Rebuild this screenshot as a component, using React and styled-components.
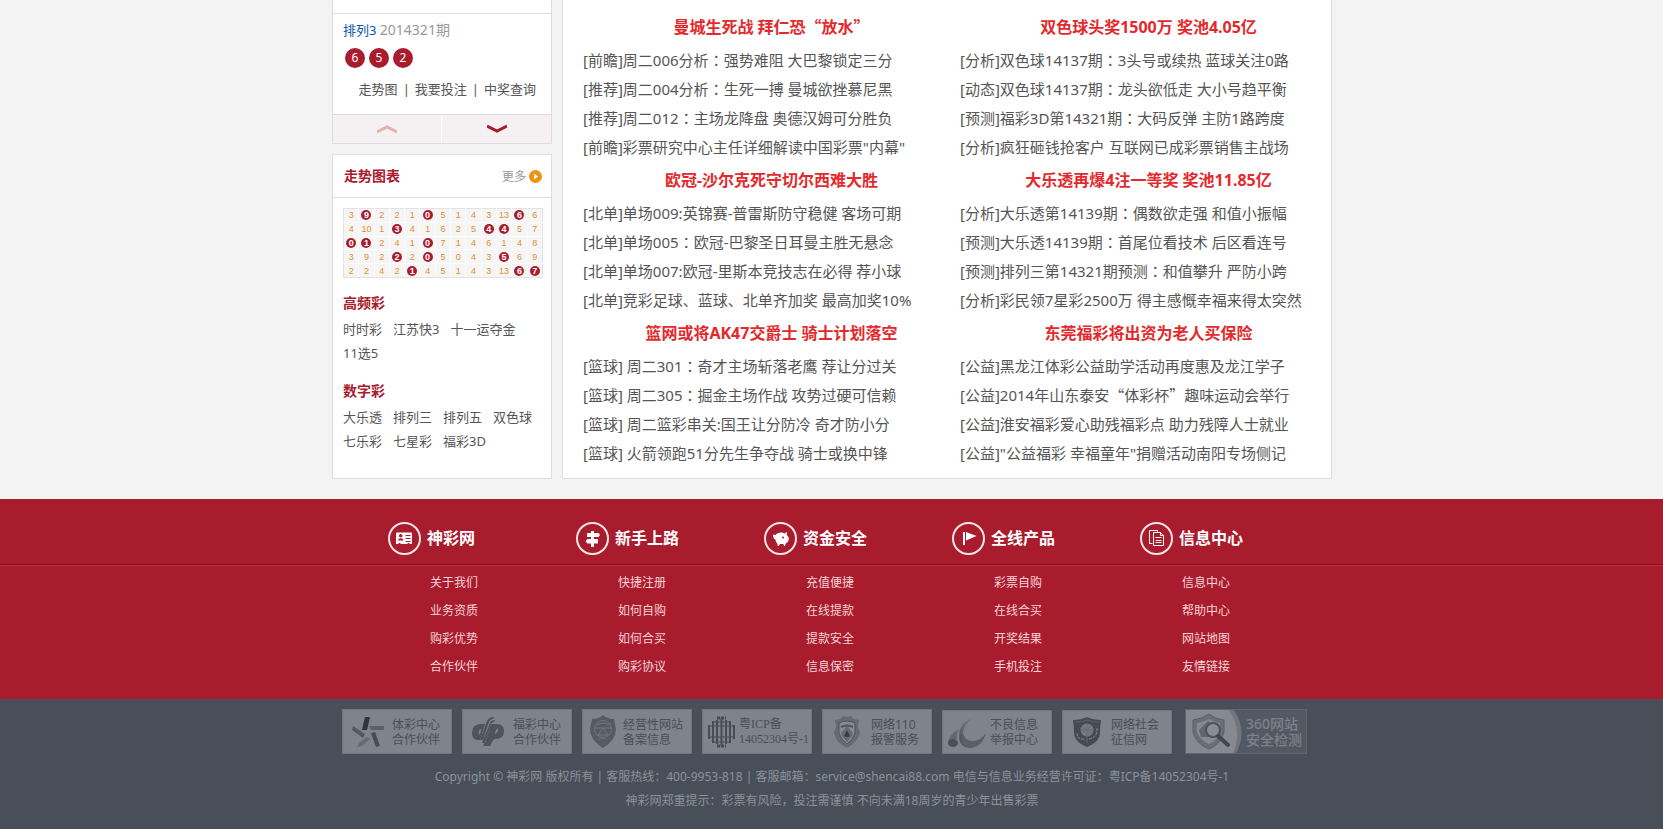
import React from "react";
import styled, { createGlobalStyle } from "styled-components";

const crimson = "#a81c2e";
const latinFirst = `"Noto Sans", "Noto Sans CJK SC", sans-serif`;

const GlobalStyle = createGlobalStyle`
  *, *::before, *::after { box-sizing: border-box; }
  body {
    margin: 0;
    background: #f3f3f3;
    color: #555;
    font-family: ${latinFirst};
    font-size: 13px;
  }
  a { color: inherit; text-decoration: none; }
  ul { list-style: none; margin: 0; padding: 0; }
  h2, h3, p { margin: 0; }
`;

const Container = styled.div`
  max-width: 1001px;
  margin: 0 auto;
  padding-left: 1px;
`;

const Main = styled.main`
  display: flex;
  gap: 10px;
  margin-bottom: 20px;
`;

const Sidebar = styled.aside`
  flex: 0 0 220px;
  display: flex;
  flex-direction: column;
  gap: 10px;
`;

const Panel = styled.section`
  background: #fff;
  border: 1px solid #ddd;
  ${(p) => p.$open && "border-top: 0;"}
  ${(p) => p.$grow && "flex: 1;"}
`;

const Draw = styled.div`
  margin-top: 13px;
  border-top: 1px solid #ddd;
  padding: 6px 10px 15px;
`;

const DrawTitle = styled.p`
  line-height: 20px;
  color: #999;
  a { color: #0a58b0; }
`;

const Period = styled.span`
  font-size: 14px;
`;

const Balls = styled.div`
  display: flex;
  gap: 4px;
  margin: 8px 2px 11px;
`;

const Ball = styled.span`
  width: 20px;
  height: 20px;
  border-radius: 50%;
  background: ${crimson};
  color: #fff;
  font-size: 12px;
  line-height: 20px;
  text-align: center;
`;

const DrawLinks = styled.nav`
  display: flex;
  justify-content: flex-end;
  gap: 5px;
  padding-right: 5px;
  line-height: 20px;
`;

const Pager = styled.div`
  display: grid;
  grid-template-columns: 1fr 1fr;
  border-top: 1px solid #ddd;
`;

const PagerButton = styled.button`
  display: flex;
  align-items: center;
  justify-content: center;
  height: 28px;
  padding: 0;
  border: 0;
  background: #f5f0f1;
  color: ${(p) => (p.$muted ? "#e5b3ae" : crimson)};
  &:first-child { border-right: 1px solid #fff; }
`;

const PanelHead = styled.header`
  display: flex;
  align-items: center;
  justify-content: space-between;
  height: 43px;
  padding: 0 9px 0 11px;
  border-bottom: 1px solid #ddd;
`;

const PanelTitle = styled.h2`
  color: ${crimson};
  font-size: 14px;
  line-height: 24px;
`;

const More = styled.a`
  display: flex;
  align-items: center;
  gap: 3px;
  font-size: 12px;
  && { color: #999; }
`;

const PanelBody = styled.div`
  padding: 10px 8px 24px 10px;
`;

const Trend = styled.table`
  width: 100%;
  height: 70px;
  table-layout: fixed;
  border-collapse: collapse;
  border: 1px solid #e2e2e2;
  background: #f5f5f5;
  color: #e0912c;
  font: 9px/10px "Liberation Sans", sans-serif;
  td {
    height: 13px;
    padding: 0;
    border: 1px solid #fbfbfb;
    text-align: center;
  }
  tr:first-child td { border-top-color: #e2e2e2; }
  tr:last-child td { border-bottom-color: #e2e2e2; }
  td:first-child { border-left-color: #e2e2e2; }
  td:last-child { border-right-color: #e2e2e2; }
`;

const Hit = styled.b`
  display: block;
  width: 10px;
  height: 10px;
  margin: 0 auto;
  border-radius: 50%;
  background: ${crimson};
  color: #fff;
`;

const GroupTitle = styled.h3`
  margin: 13px 0 2px;
  color: ${crimson};
  font-size: 14px;
  line-height: 24px;
`;

const Games = styled.ul`
  display: flex;
  flex-wrap: wrap;
  column-gap: 11px;
  padding-bottom: 1px;
  line-height: 24px;
`;

const News = styled(Panel)`
  flex: 1;
  padding: 9px 0 10px 20px;
`;

const NewsGrid = styled.div`
  display: grid;
  grid-template-columns: 1fr 1fr;
  margin-right: -6px;
`;

const Headline = styled.h2`
  color: #e4292c;
  font-size: 16px;
  line-height: 37px;
  text-align: center;
`;

const NewsList = styled.ul`
  font-size: 15px;
  line-height: 29px;
  white-space: nowrap;
`;

const WideMark = styled.span`
  font-family: "Noto Sans CJK TC", sans-serif;
  line-height: 1;
`;

const WideQuote = styled.span`
  font-family: "Noto Sans CJK SC", sans-serif;
  line-height: 1;
`;

const SiteNav = styled.nav`
  background: ${crimson};
  color: #fff;
`;

const NavHeads = styled.div`
  border-bottom: 1px solid #8c0418;
  padding: 23px 0 9px;
`;

const NavLists = styled.div`
  border-top: 1px solid #b83446;
  padding: 3px 0 18px;
`;

const NavGrid = styled.div`
  display: grid;
  grid-template-columns: repeat(5, 188px);
  padding-left: 56px;
`;

const NavHead = styled.h2`
  display: flex;
  align-items: center;
  gap: 6px;
  font-size: 16px;
  line-height: 33px;
`;

const NavList = styled.ul`
  padding-left: 42px;
  color: #f6d3d7;
  font-size: 12px;
  line-height: 28px;
`;

const Legal = styled.footer`
  background: #484f59;
  color: #8b929a;
  padding: 10px 0 16px;
  font-size: 12px;
  line-height: 24px;
  text-align: center;
`;

const Badges = styled.div`
  display: flex;
  align-items: flex-end;
  gap: 10px;
  padding-left: 10px;
  margin-bottom: 11px;
`;

const Badge = styled.a`
  display: flex;
  align-items: center;
  width: 110px;
  height: ${(p) => (p.$short ? 44 : 45)}px;
  border: 1px solid #70767e;
  background: #7f838b;
  text-align: left;
  white-space: nowrap;
  font-size: 12px;
  line-height: 15px;
  && { color: #484f59; }
`;

const BadgeArt = styled.span`
  display: flex;
  justify-content: ${(p) => (p.$flush ? "flex-start" : "center")};
  flex: 0 0 ${(p) => p.$w}px;
`;

const BadgeText = styled.span`
  ${(p) => p.$serif && `font-family: "Liberation Serif", "Noto Sans CJK SC", serif;`}
`;

const SafeBadge = styled(Badge)`
  width: 122px;
  height: 45px;
  margin-left: 3px;
  background: #535963;
  border-color: #60666e;
  font-size: 14px;
  line-height: 16px;
  font-weight: 500;
  && { color: #7c828a; }
`;

function Cn({ children }) {
  return children.split(/([：“”])/).map((part, i) => {
    if (part === "：") return <WideMark key={i} lang="zh-TW">{part}</WideMark>;
    if (part === "“" || part === "”") return <WideQuote key={i} lang="zh-CN">{part}</WideQuote>;
    return part;
  });
}

const trend = [
  "3 *9 2 2 1 *0 5 1 4 3 13 *6 6",
  "4 10 1 *3 4 1 6 2 5 *4 *4 5 7",
  "*0 *1 2 4 1 *0 7 1 4 6 1 4 8",
  "3 9 2 *2 2 *0 5 0 4 3 *5 6 9",
  "2 2 4 2 *1 4 5 1 4 3 13 *6 *7",
].map((r) => r.split(" "));

const groups = [
  ["高频彩", ["时时彩", "江苏快3", "十一运夺金", "11选5"]],
  ["数字彩", ["大乐透", "排列三", "排列五", "双色球", "七乐彩", "七星彩", "福彩3D"]],
];

const news = [
  ["曼城生死战 拜仁恐“放水”", [
    "[前瞻]周二006分析：强势难阻 大巴黎锁定三分",
    "[推荐]周二004分析：生死一搏 曼城欲挫慕尼黑",
    "[推荐]周二012：主场龙降盘 奥德汉姆可分胜负",
    "[前瞻]彩票研究中心主任详细解读中国彩票\"内幕\""]],
  ["双色球头奖1500万 奖池4.05亿", [
    "[分析]双色球14137期：3头号或续热 蓝球关注0路",
    "[动态]双色球14137期：龙头欲低走 大小号趋平衡",
    "[预测]福彩3D第14321期：大码反弹 主防1路跨度",
    "[分析]疯狂砸钱抢客户 互联网已成彩票销售主战场"]],
  ["欧冠-沙尔克死守切尔西难大胜", [
    "[北单]单场009:英锦赛-普雷斯防守稳健 客场可期",
    "[北单]单场005：欧冠-巴黎圣日耳曼主胜无悬念",
    "[北单]单场007:欧冠-里斯本竞技志在必得 荐小球",
    "[北单]竞彩足球、蓝球、北单齐加奖 最高加奖10%"]],
  ["大乐透再爆4注一等奖 奖池11.85亿", [
    "[分析]大乐透第14139期：偶数欲走强 和值小振幅",
    "[预测]大乐透14139期：首尾位看技术 后区看连号",
    "[预测]排列三第14321期预测：和值攀升 严防小跨",
    "[分析]彩民领7星彩2500万 得主感慨幸福来得太突然"]],
  ["篮网或将AK47交爵士 骑士计划落空", [
    "[篮球] 周二301：奇才主场斩落老鹰 荐让分过关",
    "[篮球] 周二305：掘金主场作战 攻势过硬可信赖",
    "[篮球] 周二篮彩串关:国王让分防冷 奇才防小分",
    "[篮球] 火箭领跑51分先生争夺战 骑士或换中锋"]],
  ["东莞福彩将出资为老人买保险", [
    "[公益]黑龙江体彩公益助学活动再度惠及龙江学子",
    "[公益]2014年山东泰安“体彩杯”趣味运动会举行",
    "[公益]淮安福彩爱心助残福彩点 助力残障人士就业",
    "[公益]\"公益福彩 幸福童年\"捐赠活动南阳专场侧记"]],
];

const glyphs = {
  card: (
    <>
      <path d="M8 11.5q0-1 1-1h14q1 0 1 1V22h-2.5v-1h-2v1h-7v-1h-2v1H8z" fill="#fff" />
      <circle cx="12.7" cy="13.8" r="1.8" fill={crimson} />
      <path d="M9.8 18.6q.3-2.4 2.9-2.4t2.9 2.4z" fill={crimson} />
      <path d="M17.5 13.5h5M17.5 16.5h5M17.5 19.5h5" stroke={crimson} />
    </>
  ),
  sign: (
    <path d="M15 9h3v2h4.500l1.500 2-1.500 2H18v2h4v4.500h-4V25h-3v-3.500h-3.500L9.500 19.300l2-2.300H15v-2h-4v-4h4z" fill="#fff" />
  ),
  pig: (
    <>
      <path d="M9 12.500l2.500.5q1.500-2.500 5-2.500 2.500-.2 4 1l2.500-1.700-.3 3.200q2.500 1.500 2 5-.5 2.500-3 3.500l-.7 2.500h-1l-.6-2h-3.500l-1 2h-1l-.8-2.800q-1.600-1.200-1.600-3.700-2-.5-2.500-3z" fill="#fff" />
      <circle cx="19" cy="15.500" r="1" fill={crimson} />
    </>
  ),
  flag: (
    <>
      <path d="M12 10v13" stroke="#fff" strokeWidth="2" />
      <path d="M14 10l10.500 4L14 18.500z" fill="#fff" />
    </>
  ),
  docs: (
    <g fill="none" stroke="#fff" strokeWidth="1">
      <path d="M12.500 21.500h-3v-13h8v2M13.500 10.500h7l3 3v10h-10zM20.500 10.500v3h3M15.500 15.500h6M15.500 18.500h6M15.500 20.500h6" />
    </g>
  ),
};

function NavIcon({ name }) {
  return (
    <svg width="33" height="33" viewBox="0 0 33 33" aria-hidden="true">
      <circle cx="16.500" cy="16.500" r="15.500" fill="none" stroke="#f8e6e8" strokeWidth="2" />
      {glyphs[name]}
    </svg>
  );
}

const navs = [
  ["card", "神彩网", ["关于我们", "业务资质", "购彩优势", "合作伙伴"]],
  ["sign", "新手上路", ["快捷注册", "如何自购", "如何合买", "购彩协议"]],
  ["pig", "资金安全", ["充值便捷", "在线提款", "提款安全", "信息保密"]],
  ["flag", "全线产品", ["彩票自购", "在线合买", "开奖结果", "手机投注"]],
  ["docs", "信息中心", ["信息中心", "帮助中心", "网站地图", "友情链接"]],
];

const StarArt = () => (
  <svg width="34" height="34" viewBox="0 0 34 34">
    <path d="M14 2h5l-3 13h-5z" fill="#30353d" />
    <path d="M18 11h15v4H20z" fill="#5b6068" />
    <path d="M20 18l4-1 5 14-4 1z" fill="#484d55" />
    <path d="M16 22l3 2-8 7-5 1 2-4z" fill="#666b73" />
    <path d="M2 11l12 8-2 4L1 15z" fill="#545962" />
  </svg>
);

const WelfareArt = () => (
  <svg width="34" height="32" viewBox="0 0 34 32" fill="#4e535c">
    <path fillRule="evenodd" d="M9 8h5l-5 16Q1 25 1 17q0-8 8-9zM9 13q-2 2-1 6 2-2 2-6z" />
    <path fillRule="evenodd" d="M25 8q8 0 8 7 0 8-9 8l-2 1-3 6h-7l3-5 5-17zM27 12q-3 2-3 6 4-2 3-6z" />
    <path d="M16 5q2-4 7-4l-1 2q-3 0-4 3l-6 18h-3zM19 7q1-3 5-3l-1 2q-2 0-3 2l-6 19h-3z" />
  </svg>
);

const PoliceArt = () => (
  <svg width="28" height="35" viewBox="0 0 28 35">
    <path d="M14 1q4 4 11 4l2 10q0 11-13 19Q1 26 1 15L3 5q7 0 11-4z" fill="#555a63" />
    <circle cx="14" cy="15" r="8.500" fill="none" stroke="#71767e" />
    <path d="M6 14h16M9 21l5-7 5 7zM8 11q6-4 12 0" fill="none" stroke="#747981" />
    <path d="M9 25h10" stroke="#6a6f77" />
  </svg>
);

const IcpArt = () => (
  <svg width="27" height="32" viewBox="0 0 27 32" fill="none" stroke="#484d55" strokeWidth="2">
    <path d="M1 9v14M5 5v22M9 4v24M13.500 2v28M18 4v24M22 5v22M26 9v14" />
    <path d="M9 2h9M9 30h9" strokeWidth="3" strokeDasharray="3 1" />
    <path d="M1 10h25M1 21h25M5 6h17M5 26h17" strokeWidth="1" />
  </svg>
);

const AlarmArt = () => (
  <svg width="30" height="34" viewBox="0 0 30 34">
    <path d="M3 5l5-1 3-3 4 1 4-1 3 3 5 1-1 6 2 7q-3 10-13 15Q4 28 2 18l2-7z" fill="#666b73" />
    <path d="M7 8q8-4 16 0v10q-2 7-8 11-6-4-8-11z" fill="#858a92" stroke="#4f545d" />
    <path d="M15 9l3 6q4 2 2 6l-5 6-5-6q-2-4 2-6z" fill="#666b73" />
    <path d="M15 15l2 4q2 3-2 3t-2-3z" fill="#383d45" />
    <path d="M9 12q6-3 12 0" fill="none" stroke="#4f545d" strokeWidth="2" />
  </svg>
);

const ReportArt = () => (
  <svg width="40" height="34" viewBox="0 0 40 34">
    <defs>
      <linearGradient id="moon" x1="0" y1="1" x2="1" y2="0">
        <stop offset="0" stopColor="#464b54" />
        <stop offset="1" stopColor="#8f939b" />
      </linearGradient>
    </defs>
    <path d="M31 1Q17 7 16 17q1 9 10 9 9 0 13-8-4 14-16 15-11-1-11-12Q12 6 31 1z" fill="url(#moon)" />
    <path d="M15 22q5 5 12 4 7-1 12-8-4 14-16 15-5-1-8-5z" fill="#5a5f68" />
    <path d="M12 14q-9 5-11 13 5-3 9-3-1-6 2-10z" fill="#60656e" />
    <ellipse cx="6" cy="28" rx="5" ry="4" fill="#4a4f58" />
  </svg>
);

const CreditArt = () => (
  <svg width="30" height="32" viewBox="0 0 30 32">
    <path d="M1 4q8 0 14-3 6 3 14 3-1 7-1 13 0 9-13 14Q2 26 2 17 2 11 1 4z" fill="#454a53" />
    <path d="M4 6q6 0 11-2 5 2 11 2" fill="none" stroke="#5f646c" />
    <circle cx="15" cy="14" r="6.500" fill="#777c84" />
    <path d="M10 11l9 6M11 17l8-7M15 8v19M9 14h12" stroke="#666b73" />
    <path d="M5 17q0 7 8 6M25 12q1 9-8 11" fill="none" stroke="#858a92" strokeDasharray="3 1" />
  </svg>
);

const SafeArt = () => (
  <svg width="56" height="43" viewBox="0 0 56 43">
    <path d="M0 0h48q14 21 2 43H0z" fill="#70757d" />
    <path d="M0 0h43q14 21 4 43H0z" fill="#858991" />
    <path d="M23 4q6 5 15 6v12q-3 12-15 17Q10 34 7 22V10q9-1 16-6z" fill="#6a6f77" stroke="#5a5f68" />
    <path d="M23 9q5 3 11 4v9q-3 9-11 12-9-4-12-12v-9q7-1 12-4z" fill="#858a92" />
    <path d="M13 20l9-9 9 9v7H15z" fill="#62676f" />
    <circle cx="27" cy="20" r="7" fill="#888d95" stroke="#4c515a" strokeWidth="2" />
    <path d="M32 26l10 9" stroke="#42474f" strokeWidth="4" strokeLinecap="round" />
  </svg>
);

const badges = [
  { art: StarArt, w: 49, lines: ["体彩中心", "合作伙伴"] },
  { art: WelfareArt, w: 50, lines: ["福彩中心", "合作伙伴"] },
  { art: PoliceArt, w: 40, lines: ["经营性网站", "备案信息"] },
  { art: IcpArt, w: 36, lines: ["粤ICP备", "14052304号-1"], serif: true },
  { art: AlarmArt, w: 48, lines: ["网络110", "报警服务"] },
  { art: ReportArt, w: 47, lines: ["不良信息", "举报中心"], short: true },
  { art: CreditArt, w: 48, lines: ["网络社会", "征信网"], short: true },
];

export default function App() {
  return (
    <div lang="zh-CN">
      <GlobalStyle />
      <Container>
        <Main>
          <Sidebar>
            <Panel $open>
              <Draw>
                <DrawTitle><a href="#pl3">排列3</a> <Period>2014321期</Period></DrawTitle>
                <Balls><Ball>6</Ball><Ball>5</Ball><Ball>2</Ball></Balls>
                <DrawLinks>
                  <a href="#trend">走势图</a><span>|</span>
                  <a href="#bet">我要投注</a><span>|</span>
                  <a href="#win">中奖查询</a>
                </DrawLinks>
              </Draw>
              <Pager>
                <PagerButton $muted aria-label="上一个">
                  <svg width="20" height="10" viewBox="0 0 20 10"><path d="M0 8l10-5 10 5" fill="none" stroke="currentColor" strokeWidth="3" /></svg>
                </PagerButton>
                <PagerButton aria-label="下一个">
                  <svg width="20" height="10" viewBox="0 0 20 10"><path d="M0 2l10 5 10-5" fill="none" stroke="currentColor" strokeWidth="3" /></svg>
                </PagerButton>
              </Pager>
            </Panel>
            <Panel $grow>
              <PanelHead>
                <PanelTitle>走势图表</PanelTitle>
                <More href="#more">
                  更多
                  <svg width="13" height="13" viewBox="0 0 13 13" aria-hidden="true">
                    <circle cx="6.500" cy="6.500" r="6.500" fill="#ee930f" />
                    <path d="M5 3.500l4 3-4 3z" fill="#fff" />
                  </svg>
                </More>
              </PanelHead>
              <PanelBody>
                <Trend>
                  <tbody>
                    {trend.map((row, r) => (
                      <tr key={r}>
                        {row.map((v, c) => (
                          <td key={c}>{v[0] === "*" ? <Hit>{v.slice(1)}</Hit> : v}</td>
                        ))}
                      </tr>
                    ))}
                  </tbody>
                </Trend>
                {groups.map(([title, games]) => (
                  <React.Fragment key={title}>
                    <GroupTitle>{title}</GroupTitle>
                    <Games>
                      {games.map((g) => <li key={g}><a href="#game">{g}</a></li>)}
                    </Games>
                  </React.Fragment>
                ))}
              </PanelBody>
            </Panel>
          </Sidebar>
          <News $open>
            <NewsGrid>
              {news.map(([title, items]) => (
                <article key={title}>
                  <Headline><a href="#news"><Cn>{title}</Cn></a></Headline>
                  <NewsList>
                    {items.map((t) => <li key={t}><a href="#news"><Cn>{t}</Cn></a></li>)}
                  </NewsList>
                </article>
              ))}
            </NewsGrid>
          </News>
        </Main>
      </Container>
      <SiteNav>
        <NavHeads>
          <Container>
            <NavGrid>
              {navs.map(([icon, title]) => (
                <NavHead key={title}><NavIcon name={icon} />{title}</NavHead>
              ))}
            </NavGrid>
          </Container>
        </NavHeads>
        <NavLists>
          <Container>
            <NavGrid>
              {navs.map(([, title, links]) => (
                <NavList key={title}>
                  {links.map((l) => <li key={l}><a href="#info">{l}</a></li>)}
                </NavList>
              ))}
            </NavGrid>
          </Container>
        </NavLists>
      </SiteNav>
      <Legal>
        <Container>
          <Badges>
            {badges.map(({ art: Art, w, lines, serif, short }, i) => (
              <Badge key={i} href="#partner" $short={short}>
                <BadgeArt $w={w}><Art /></BadgeArt>
                <BadgeText $serif={serif}>{lines[0]}<br />{lines[1]}</BadgeText>
              </Badge>
            ))}
            <SafeBadge href="#safe">
              <BadgeArt $w={60} $flush><SafeArt /></BadgeArt>
              <BadgeText>360网站<br />安全检测</BadgeText>
            </SafeBadge>
          </Badges>
          <p>Copyright © 神彩网 版权所有 | 客服热线：400-9953-818 | 客服邮箱：service@shencai88.com 电信与信息业务经营许可证：粤ICP备14052304号-1</p>
          <p>神彩网郑重提示：彩票有风险，投注需谨慎 不向未满18周岁的青少年出售彩票</p>
        </Container>
      </Legal>
    </div>
  );
}
